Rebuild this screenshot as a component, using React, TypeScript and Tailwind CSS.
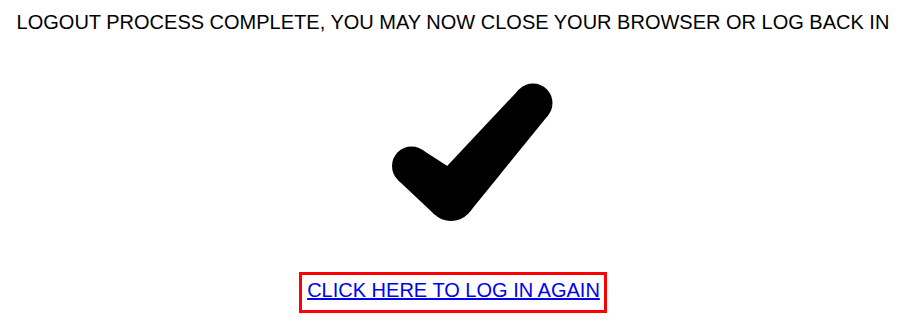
import React from "react";

type P = [number, number];

function hull(a: P, ra: number, b: P, rb: number): string {
  const dx = b[0] - a[0];
  const dy = b[1] - a[1];
  const d = Math.hypot(dx, dy);
  const u: P = [dx / d, dy / d];
  const c = (ra - rb) / d;
  const s = Math.sqrt(1 - c * c);
  const perp: P = [u[1], -u[0]];
  const n1: P = [u[0] * c + perp[0] * s, u[1] * c + perp[1] * s];
  const n2: P = [u[0] * c - perp[0] * s, u[1] * c - perp[1] * s];
  const pts: P[] = [
    [a[0] + ra * n1[0], a[1] + ra * n1[1]],
    [b[0] + rb * n1[0], b[1] + rb * n1[1]],
    [b[0] + rb * n2[0], b[1] + rb * n2[1]],
    [a[0] + ra * n2[0], a[1] + ra * n2[1]],
  ];
  return pts.map((p) => p.join(",")).join(" ");
}

function Check() {
  const L: P = [411.5, 166];
  const V: P = [451, 197];
  const R: P = [533, 103];
  const rl = 19.5;
  const rv = 24;
  const rr = 19.5;
  return (
    <svg width="906" height="180" viewBox="0 60 906 180" className="block mt-[26px]">
      <g fill="#000">
        <circle cx={L[0]} cy={L[1]} r={rl} />
        <circle cx={V[0]} cy={V[1]} r={rv} />
        <circle cx={R[0]} cy={R[1]} r={rr} />
        <polygon points={hull(L, rl, V, rv)} />
        <polygon points={hull(V, rv, R, rr)} />
      </g>
    </svg>
  );
}

export default function App() {
  return (
    <div
      className="w-[906px] bg-white text-black text-center text-[20px]"
      style={{ fontFamily: '"Liberation Sans", Arial, sans-serif' }}
    >
      <div className="pt-[11px] leading-[23px]">
        LOGOUT PROCESS COMPLETE, YOU MAY NOW CLOSE YOUR BROWSER OR LOG BACK IN
      </div>
      <Check />
      <div className="flex justify-center mt-[32px]">
        <div className="border-[3px] border-[#ff0000] pl-[5px] pr-[4px] pt-[4px] pb-[8px] leading-[23px]">
          <a href="#" className="text-[#0000ee] underline">
            CLICK HERE TO LOG IN AGAIN
          </a>
        </div>
      </div>
    </div>
  );
}
